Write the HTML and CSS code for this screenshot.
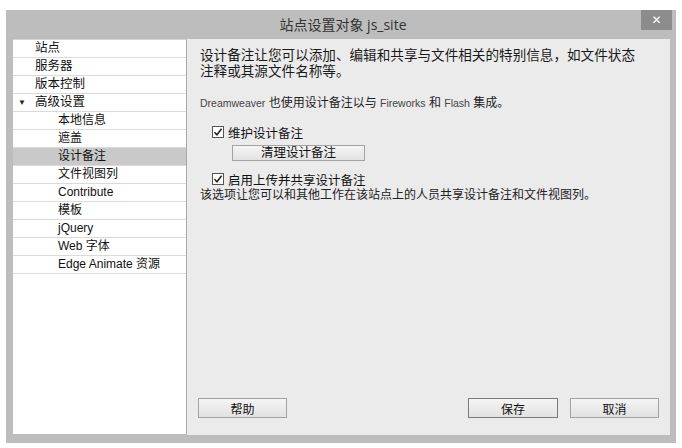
FILE: index.html
```html
<!DOCTYPE html>
<html lang="zh-CN">
<head>
    <meta charset="UTF-8">
    <title>站点设置对象 js_site</title>
    <link rel="stylesheet" href="styles.css">
</head>
<body>
    <div class="window">
        <div class="titlebar">
            <span></span>
            <div class="title">站点设置对象 js_site</div>
            <button class="close-btn">&#x2715;</button>
        </div>
        <div class="window-body">
            <ul class="side-list">
                <li>站点</li>
                <li>服务器</li>
                <li>版本控制</li>
                <li class="group"><span class="arrow">&#9660;</span>高级设置</li>
                <li class="sub">本地信息</li>
                <li class="sub">遮盖</li>
                <li class="sub active">设计备注</li>
                <li class="sub">文件视图列</li>
                <li class="sub">Contribute</li>
                <li class="sub">模板</li>
                <li class="sub">jQuery</li>
                <li class="sub">Web 字体</li>
                <li class="sub">Edge Animate 资源</li>
            </ul>
            <div class="panel">
                <p class="intro">设计备注让您可以添加、编辑和共享与文件相关的特别信息，如文件状态注释或其源文件名称等。</p>
                <p class="note"><span class="en">Dreamweaver</span> 也使用设计备注以与 <span class="en">Fireworks</span> 和 <span class="en">Flash</span> 集成。</p>
                <label class="check-row">
                    <span class="checkbox">
                        <svg width="10" height="10" viewBox="0 0 10 10"><path d="M1.5 5.2 L4 7.8 L8.6 1.8" fill="none" stroke="#222" stroke-width="1.5"/></svg>
                    </span>
                    维护设计备注
                </label>
                <button class="btn btn-clean">清理设计备注</button>
                <label class="check-row check-share">
                    <span class="checkbox">
                        <svg width="10" height="10" viewBox="0 0 10 10"><path d="M1.5 5.2 L4 7.8 L8.6 1.8" fill="none" stroke="#222" stroke-width="1.5"/></svg>
                    </span>
                    启用上传并共享设计备注
                </label>
                <p class="desc">该选项让您可以和其他工作在该站点上的人员共享设计备注和文件视图列。</p>
                <div class="footer">
                    <button class="btn btn-help">帮助</button>
                    <div class="footer-right">
                        <button class="btn btn-save">保存</button>
                        <button class="btn">取消</button>
                    </div>
                </div>
            </div>
        </div>
    </div>
</body>
</html>
```

FILE: styles.css
```css
body {
    margin: 0;
    background-color: #fff;
    font-family: "Liberation Sans", "Noto Sans CJK SC", sans-serif;
    color: #222;
}
.window {
    margin: 10px 0 0 6px;
    width: 670px;
    height: 433px;
    background-color: #bdbdbd;
    display: flex;
    flex-direction: column;
}
.titlebar {
    height: 29px;
    display: grid;
    grid-template-columns: 1fr auto 1fr;
}
.title {
    font-family: "Open Sans", "Noto Sans CJK SC", sans-serif;
    font-size: 14px;
    color: #333;
    line-height: 29px;
    padding-left: 4px;
}
.close-btn {
    justify-self: end;
    align-self: start;
    width: 31px;
    height: 20px;
    margin-right: 4px;
    padding: 0;
    border: none;
    background-color: #8c8c8c;
    color: #fff;
    font-size: 12px;
    font-weight: bold;
    font-family: "DejaVu Sans", sans-serif;
}
.window-body {
    flex: 1;
    display: flex;
    padding: 0 6px 8px 7px;
}
.side-list {
    width: 173px;
    margin: 0 0 1px 0;
    padding: 0;
    list-style: none;
    background-color: #fff;
    border-right: 1px solid #a8a8a8;
    border-top: 1px solid #d4d4d4;
}
.side-list li {
    height: 17px;
    line-height: 17px;
    border-bottom: 1px solid #dadada;
    padding-left: 22px;
    font-size: 12.5px;
    color: #111;
    display: flex;
    align-items: center;
}
.side-list li.sub {
    padding-left: 45px;
    font-size: 12px;
}
.side-list li.group {
    padding-left: 5px;
}
.arrow {
    font-size: 8px;
    width: 17px;
    color: #222;
}
.side-list li.active {
    background-color: #c9c9c9;
}
.panel {
    flex: 1;
    background-color: #ebebeb;
    padding: 9px 11px 17px 13px;
    display: flex;
    flex-direction: column;
    align-items: flex-start;
}
.panel p {
    margin: 0;
}
.intro {
    font-size: 13.6px;
    line-height: 16px;
    width: 440px;
    color: #1a1a1a;
}
.note {
    margin-top: 15px !important;
    font-size: 12px;
    line-height: 16px;
}
.en {
    font-size: 10.5px;
    color: #444;
}
.check-row {
    display: flex;
    align-items: center;
    height: 16px;
    margin-top: 13px;
    margin-left: 12px;
    font-size: 12.5px;
    color: #111;
}
.check-share {
    margin-top: 10px;
}
.checkbox {
    width: 10px;
    height: 10px;
    border: 1px solid #555;
    background-color: #fff;
    margin-right: 4px;
    display: flex;
}
.btn {
    font-family: "Liberation Sans", "Noto Sans CJK SC", sans-serif;
    font-size: 12px;
    color: #111;
    background: linear-gradient(#f4f4f4, #e2e2e2);
    border: 1px solid #a3a3a3;
    padding: 0;
    width: 89px;
    height: 20px;
}
.btn-clean {
    margin: 5px 0 0 32px;
    width: 133px;
    height: 16px;
    font-size: 12.5px;
    line-height: 14px;
}
.desc {
    font-size: 12px;
    line-height: 16px;
}
.footer {
    margin-top: auto;
    align-self: stretch;
    display: flex;
    justify-content: space-between;
    margin-left: -2px;
}
.footer-right {
    display: flex;
    gap: 12px;
}
.btn-save {
    width: 90px;
    border-color: #7a7a7a;
}
```
